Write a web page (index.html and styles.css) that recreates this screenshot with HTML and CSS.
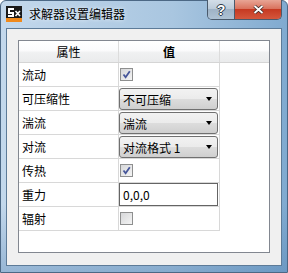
FILE: index.html
```html
<!DOCTYPE html>
<html lang="zh-CN">
<head>
<meta charset="UTF-8">
<title>求解器设置编辑器</title>
<link rel="stylesheet" href="styles.css">
</head>
<body>
<div class="window">
  <div class="titlebar">
    <svg class="app-icon" width="16" height="16" viewBox="0 0 16 16">
      <rect width="16" height="16" fill="#1a1a1a"/>
      <rect x="0" y="12" width="16" height="4" fill="#f08a1c"/>
      <rect x="2" y="2" width="6" height="2" fill="#fff"/>
      <rect x="2" y="2" width="2" height="5" fill="#fff"/>
      <rect x="2" y="6" width="6" height="2" fill="#fff"/>
      <rect x="6" y="6" width="2" height="5" fill="#fff"/>
      <rect x="2" y="9" width="6" height="2" fill="#fff"/>
      <path d="M9.5 5 L14 10 M14 5 L9.5 10" stroke="#fff" stroke-width="1.6"/>
    </svg>
    <span class="title">求解器设置编辑器</span>
    <div class="caption-btns">
      <div class="cap-btn help">?</div>
      <div class="cap-btn close">
        <svg width="11" height="9" viewBox="0 0 11 9">
          <path d="M1.5 1 L9.5 8 M9.5 1 L1.5 8" stroke="#3a2a28" stroke-width="3.4"/>
          <path d="M1.5 1 L9.5 8 M9.5 1 L1.5 8" stroke="#fff" stroke-width="1.8"/>
        </svg>
      </div>
    </div>
  </div>

  <div class="client">
    <div class="grid">
      <div class="grid-head">
        <div class="hcell name">属性</div>
        <div class="hcell value">值</div>
        <div class="hcell fill"></div>
      </div>
      <div class="grid-body">
        <div class="row">
          <div class="cell name">流动</div>
          <div class="cell value"><span class="check"><svg width="11" height="11" viewBox="0 0 11 11"><path d="M2.5 5.5 L4.6 8.2 L8.8 2.2" fill="none" stroke="#46569a" stroke-width="1.8"/></svg></span></div>
        </div>
        <div class="row">
          <div class="cell name">可压缩性</div>
          <div class="cell value"><div class="combo"><span>不可压缩</span><i class="arrow"></i></div></div>
        </div>
        <div class="row">
          <div class="cell name">湍流</div>
          <div class="cell value"><div class="combo"><span>湍流</span><i class="arrow"></i></div></div>
        </div>
        <div class="row">
          <div class="cell name">对流</div>
          <div class="cell value"><div class="combo"><span>对流格式 1</span><i class="arrow"></i></div></div>
        </div>
        <div class="row">
          <div class="cell name">传热</div>
          <div class="cell value"><span class="check"><svg width="11" height="11" viewBox="0 0 11 11"><path d="M2.5 5.5 L4.6 8.2 L8.8 2.2" fill="none" stroke="#46569a" stroke-width="1.8"/></svg></span></div>
        </div>
        <div class="row">
          <div class="cell name">重力</div>
          <div class="cell value"><div class="textbox">0,0,0</div></div>
        </div>
        <div class="row">
          <div class="cell name">辐射</div>
          <div class="cell value"><span class="check"></span></div>
        </div>
      </div>
    </div>
  </div>
</div>
</body>
</html>
```

FILE: styles.css
```css
/* window frame */
* {
  box-sizing: border-box;
}
body {
  margin: 0;
  font-family: "Noto Sans CJK SC", "Liberation Sans", sans-serif;
  font-size: 12px;
  color: #000;
}
.window {
  width: 288px;
  height: 273px;
  border: 1px solid #4c6885;
  border-radius: 6px 6px 0 0;
  background:
    linear-gradient(to bottom, rgba(70, 120, 170, 0) 75%, rgba(70, 120, 170, 0.35)),
    linear-gradient(to right, #c3d8ec, #a9c6e0 60%, #80aad0);
  display: flex;
  flex-direction: column;
}

/* title bar */
.titlebar {
  height: 27px;
  display: flex;
  align-items: flex-start;
  padding-left: 5px;
}
.app-icon {
  margin-top: 5px;
  flex: none;
}
.title {
  margin-left: 7px;
  margin-top: 5px;
  line-height: 16px;
  font-size: 12px;
  text-shadow: 0 0 4px rgba(255, 255, 255, 0.9);
}
.caption-btns {
  margin-left: auto;
  margin-right: 5px;
  margin-top: -1px;
  display: flex;
  height: 20px;
  border: 1px solid #4a5a6c;
  border-top: none;
  border-radius: 0 0 5px 5px;
  overflow: hidden;
}
.cap-btn {
  display: flex;
  align-items: center;
  justify-content: center;
}
.help {
  width: 27px;
  background: linear-gradient(#d3dee8, #b9c9d8 50%, #9fb3c6 50%, #aec2d4);
  border-right: 1px solid #4a5a6c;
  font-family: "Liberation Sans", sans-serif;
  font-weight: bold;
  font-size: 14px;
  color: #fff;
  text-shadow: 1px 0 0 #2c3a48, -1px 0 0 #2c3a48, 0 1px 0 #2c3a48, 0 -1px 0 #2c3a48;
}
.close {
  width: 46px;
  background: linear-gradient(#e8a595, #d86e58 50%, #c63a22 50%, #d4573c);
}

/* client area */
.client {
  height: 238px;
  margin: 0 5px;
  border: 1px solid #5d7b98;
  background: #f0f0f0;
  padding: 11px 0 0 11px;
}
.grid {
  width: 252px;
  height: 213px;
  border: 1px solid #828790;
  background: #fff;
}
.grid-head {
  display: flex;
  height: 22px;
  border-bottom: 1px solid #d5d5d5;
  background: linear-gradient(#ffffff, #fbfbfc 45%, #f0f1f2 55%, #eaebec);
}
.hcell {
  display: flex;
  align-items: center;
  justify-content: center;
  border-right: 1px solid #dcdcdc;
}
.hcell.name {
  width: 100px;
}
.hcell.value {
  width: 101px;
  font-weight: bold;
}
.hcell.fill {
  flex: 1;
  border-right: none;
}

/* property rows */
.grid-body {
  width: 201px;
}
.row {
  display: flex;
  height: 24px;
  border-bottom: 1px solid #d8d8d8;
}
.cell {
  display: flex;
  align-items: center;
  border-right: 1px solid #d8d8d8;
}
.cell.name {
  width: 100px;
  padding-left: 3px;
}
.cell.value {
  width: 101px;
  padding: 1px 1px 0 0;
}
.check {
  width: 13px;
  height: 13px;
  margin-left: 1px;
  margin-top: -1px;
  border: 1px solid #8e8f8f;
  background: linear-gradient(135deg, #d6d7d9, #f4f4f4);
  display: flex;
  align-items: center;
  justify-content: center;
}
.combo {
  width: 99px;
  height: 22px;
  border: 1px solid #707070;
  border-radius: 3px;
  background: linear-gradient(#f2f2f2, #ebebeb 50%, #dddddd 50%, #cfcfcf);
  display: flex;
  align-items: center;
  padding: 0 5px 0 3px;
  justify-content: space-between;
}
.arrow {
  width: 0;
  height: 0;
  border-left: 3.5px solid transparent;
  border-right: 3.5px solid transparent;
  border-top: 4px solid #000;
}
.textbox {
  width: 99px;
  height: 23px;
  margin-top: -1px;
  border: 1px solid #646464;
  background: #fff;
  display: flex;
  align-items: center;
  padding-left: 3px;
}
```
